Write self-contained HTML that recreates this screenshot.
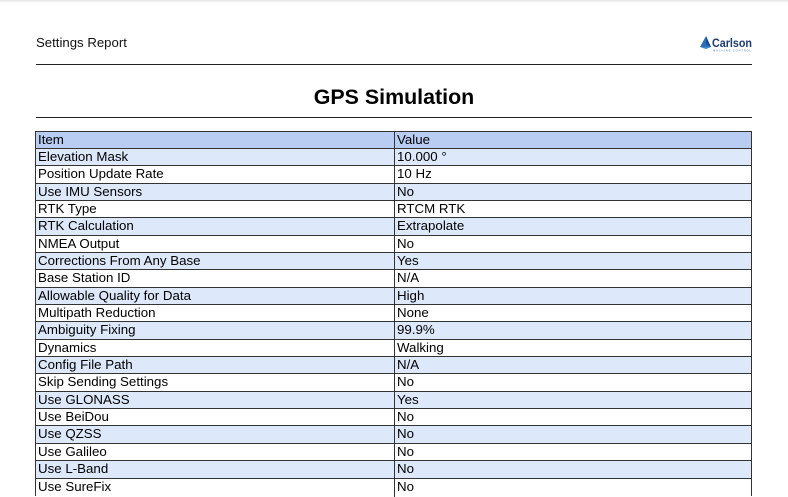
<!DOCTYPE html>
<html><head><meta charset="utf-8"><style>
body{margin:0;width:788px;height:485px;overflow:hidden;background:#fff;font-family:"Liberation Sans",Arial,sans-serif;position:relative}
.top{position:absolute;left:0;top:0;width:788px;height:3px;background:linear-gradient(#e4e4e4,#fff)}
.hdr{position:absolute;left:36px;top:35px;font-size:13.2px;color:#111}
.line{position:absolute;left:36px;width:716px;height:1px;background:#222}
.title{position:absolute;left:0;width:788px;text-align:center;top:85px;font-size:21.4px;font-weight:bold;color:#000}
.r{position:absolute;left:35px;width:717px;top:calc(130.5px + 17.35px * var(--i));border:1px solid #333;border-bottom:none;box-sizing:border-box;height:18.35px;font-size:13.3px;line-height:16.5px;color:#000}
.r.b{background:#dde8fb}
.r.h{background:#b9cdf3}
.r.w{background:#fff}
.r span{position:absolute;top:0}
.r .a{left:2px}
.r .v{left:358px;border-left:1px solid #333;padding-left:2px;height:18px}
.logo{position:absolute;left:699px;top:34px}
</style></head><body>
<div class="top"></div>
<div class="hdr">Settings Report</div>
<svg class="logo" width="56" height="18" viewBox="0 0 56 18">
<polygon points="7,2 12,13 1,13" fill="#2a6fb8"/>
<polygon points="7,2 12,13 7,10" fill="#1b4d8c"/>
<polygon points="1,13 12,13 7,15" fill="#3d88cf"/>
<text x="13" y="13" font-family="Liberation Sans,sans-serif" font-size="11.5" fill="#1c3a6e" font-weight="bold" textLength="40" lengthAdjust="spacingAndGlyphs">Carlson</text>
<text x="14" y="17.5" font-family="Liberation Sans,sans-serif" font-size="2.6" fill="#4a7fc0" textLength="38">MACHINE CONTROL</text>
</svg>
<div class="line" style="top:64px"></div>
<div class="title">GPS Simulation</div>
<div class="line" style="top:117px"></div>

<div class="r h" style="--i:0"><span class="a">Item</span><span class="v">Value</span></div>
<div class="r b" style="--i:1"><span class="a">Elevation Mask</span><span class="v">10.000 °</span></div>
<div class="r w" style="--i:2"><span class="a">Position Update Rate</span><span class="v">10 Hz</span></div>
<div class="r b" style="--i:3"><span class="a">Use IMU Sensors</span><span class="v">No</span></div>
<div class="r w" style="--i:4"><span class="a">RTK Type</span><span class="v">RTCM RTK</span></div>
<div class="r b" style="--i:5"><span class="a">RTK Calculation</span><span class="v">Extrapolate</span></div>
<div class="r w" style="--i:6"><span class="a">NMEA Output</span><span class="v">No</span></div>
<div class="r b" style="--i:7"><span class="a">Corrections From Any Base</span><span class="v">Yes</span></div>
<div class="r w" style="--i:8"><span class="a">Base Station ID</span><span class="v">N/A</span></div>
<div class="r b" style="--i:9"><span class="a">Allowable Quality for Data</span><span class="v">High</span></div>
<div class="r w" style="--i:10"><span class="a">Multipath Reduction</span><span class="v">None</span></div>
<div class="r b" style="--i:11"><span class="a">Ambiguity Fixing</span><span class="v">99.9%</span></div>
<div class="r w" style="--i:12"><span class="a">Dynamics</span><span class="v">Walking</span></div>
<div class="r b" style="--i:13"><span class="a">Config File Path</span><span class="v">N/A</span></div>
<div class="r w" style="--i:14"><span class="a">Skip Sending Settings</span><span class="v">No</span></div>
<div class="r b" style="--i:15"><span class="a">Use GLONASS</span><span class="v">Yes</span></div>
<div class="r w" style="--i:16"><span class="a">Use BeiDou</span><span class="v">No</span></div>
<div class="r b" style="--i:17"><span class="a">Use QZSS</span><span class="v">No</span></div>
<div class="r w" style="--i:18"><span class="a">Use Galileo</span><span class="v">No</span></div>
<div class="r b" style="--i:19"><span class="a">Use L-Band</span><span class="v">No</span></div>
<div class="r w" style="--i:20"><span class="a">Use SureFix</span><span class="v">No</span></div>
</body></html>
